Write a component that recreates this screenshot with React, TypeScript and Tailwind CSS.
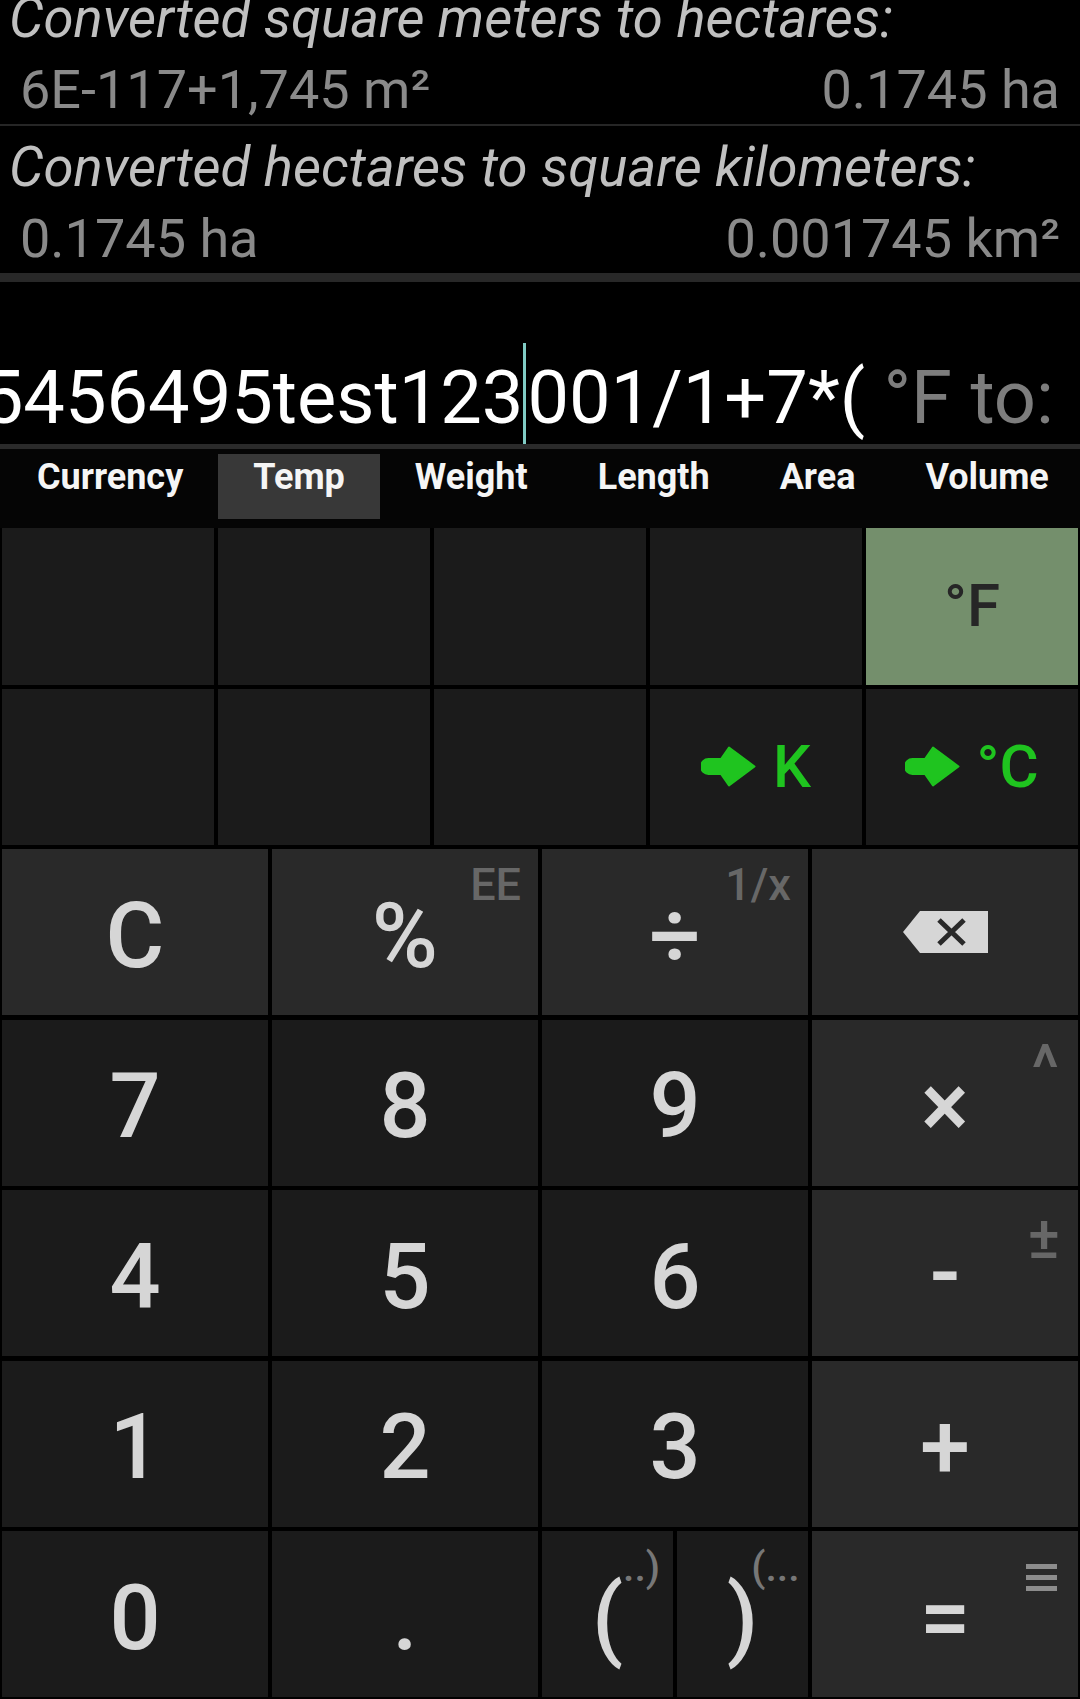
import React from "react";

const GreenArrow = () => (
  <svg width="55" height="41" viewBox="0 0 55 41" className="shrink-0">
    <path
      d="M28 1.5 L53.5 20.5 L28 39.5 L20 28 L7.5 28 A7.5 7.5 0 0 1 7.5 13 L20 13 Z"
      fill="#1fc41f"
      stroke="#1fc41f"
      strokeWidth="2"
      strokeLinejoin="round"
    />
  </svg>
);

const Backspace = () => (
  <svg width="85" height="42" viewBox="0 0 85 42">
    <path d="M0 21 L17 0 H85 V42 H17 Z" fill="#d6d6d6" />
    <path d="M36 9 L61 33 M61 9 L36 33" stroke="#292929" strokeWidth="5" />
  </svg>
);

const Bars = () => (
  <svg width="31" height="27" viewBox="0 0 31 27">
    <rect x="0" y="0" width="31" height="5" fill="#8c8c8c" />
    <rect x="0" y="11" width="31" height="5" fill="#8c8c8c" />
    <rect x="0" y="22" width="31" height="5" fill="#8c8c8c" />
  </svg>
);

function HistoryBlock({ title, left, right }: { title: string; left: string; right: string }) {
  return (
    <div className="shrink-0 pt-[14px] pb-[7px]">
      <div className="h-[54px] pl-[9px] text-[54.5px] leading-none italic text-[#c0c0c0] whitespace-nowrap">
        {title}
      </div>
      <div className="mt-[18px] flex h-[54px] justify-between px-[20px] text-[54px] leading-none text-[#8a8a8a] whitespace-nowrap">
        <span>{left}</span>
        <span>{right}</span>
      </div>
    </div>
  );
}

function Key({
  children,
  op,
  sup,
  lift,
}: {
  children: React.ReactNode;
  op?: boolean;
  sup?: React.ReactNode;
  lift?: boolean;
}) {
  return (
    <div
      className={
        "relative flex items-center justify-center overflow-hidden pt-[9px] " +
        (op ? "bg-[#292929]" : "bg-[#1b1b1b]")
      }
    >
      <span
        className={
          "text-[90px] font-medium leading-none text-[#d6d6d6] " + (lift ? "relative -top-[5px]" : "")
        }
      >
        {children}
      </span>
      {sup}
    </div>
  );
}

export default function App() {
  const tabs = ["Currency", "Temp", "Weight", "Length", "Area", "Volume"];
  return (
    <div className="flex h-[1699px] w-[1080px] flex-col overflow-hidden bg-black font-[family-name:Roboto,sans-serif]">
      {/* history */}
      <div className="flex h-[273px] shrink-0 flex-col justify-end overflow-hidden">
        <HistoryBlock title="Converted square meters to hectares:" left="6E-117+1,745 m²" right="0.1745 ha" />
        <div className="h-[2px] shrink-0 bg-[#262626]" />
        <HistoryBlock title="Converted hectares to square kilometers:" left="0.1745 ha" right="0.001745 km²" />
      </div>
      <div className="h-[9px] shrink-0 bg-[#282828]" />

      {/* input */}
      <div className="flex h-[162px] shrink-0 items-end justify-end overflow-hidden pr-[26px] pb-[9px]">
        <div className="whitespace-nowrap text-[74px] leading-none text-white">
          <span>0123455456495test123</span>
          <span className="relative inline-block h-0 w-[4px]">
            <span className="absolute left-0 top-[-80px] h-[101px] w-[3px] bg-[#80cbc4]" />
          </span>
          <span>001/1+7*(</span>
          <span className="text-[#7d7d7d]"> °F to:</span>
        </div>
      </div>
      <div className="h-[5px] shrink-0 bg-[#2a2a2a]" />

      {/* tabs */}
      <div className="flex h-[79px] shrink-0 items-start overflow-hidden bg-[#050505] pl-[2px] pt-[5px]">
        {tabs.map((t) => (
          <div
            key={t}
            className={
              "h-[65px] shrink-0 px-[35px] pt-[5px] text-[36px] font-bold leading-none text-[#f5f5f5] " +
              (t === "Temp" ? "bg-[#383838]" : "")
            }
          >
            {t}
          </div>
        ))}
      </div>

      {/* temp grid */}
      <div className="grid h-[317px] shrink-0 grid-cols-5 grid-rows-2 gap-[4px] px-[2px]">
        <div className="bg-[#1b1b1b]" />
        <div className="bg-[#1b1b1b]" />
        <div className="bg-[#1b1b1b]" />
        <div className="bg-[#1b1b1b]" />
        <div className="flex items-center justify-center bg-[#748f6c]">
          <span className="text-[60px] font-medium leading-none text-[#262626]">°F</span>
        </div>
        <div className="bg-[#1b1b1b]" />
        <div className="bg-[#1b1b1b]" />
        <div className="bg-[#1b1b1b]" />
        <div className="flex items-center justify-center gap-[17px] bg-[#1b1b1b]">
          <GreenArrow />
          <span className="text-[60px] font-medium leading-none text-[#1fc41f]">K</span>
        </div>
        <div className="flex items-center justify-center gap-[16px] bg-[#1b1b1b]">
          <GreenArrow />
          <span className="text-[60px] font-medium leading-none text-[#1fc41f]">°C</span>
        </div>
      </div>

      <div className="h-[4px] shrink-0" />

      {/* keypad */}
      <div className="grid h-[850px] shrink-0 grid-cols-4 grid-rows-5 gap-x-[4px] gap-y-[4.5px] px-[2px] pb-[2px]">
        <Key op>C</Key>
        <Key
          op
          sup={
            <span className="absolute right-[17px] top-[13px] text-[45px] font-medium leading-none text-[#676767]">
              EE
            </span>
          }
        >
          %
        </Key>
        <Key
          op
          sup={
            <span className="absolute right-[17px] top-[13px] text-[45px] font-medium leading-none text-[#676767]">
              1/x
            </span>
          }
        >
          ÷
        </Key>
        <div className="flex items-center justify-center bg-[#292929]">
          <Backspace />
        </div>

        <Key>7</Key>
        <Key>8</Key>
        <Key>9</Key>
        <Key
          op
          sup={
            <span className="absolute right-[19px] top-[17px] text-[64px] font-medium leading-none text-[#676767]">
              ^
            </span>
          }
        >
          ×
        </Key>

        <Key>4</Key>
        <Key>5</Key>
        <Key>6</Key>
        <Key
          op
          lift
          sup={
            <span className="absolute right-[18px] top-[18px] text-[60px] font-medium leading-none text-[#676767]">
              ±
            </span>
          }
        >
          -
        </Key>

        <Key>1</Key>
        <Key>2</Key>
        <Key>3</Key>
        <Key op>+</Key>

        <Key>0</Key>
        <Key>.</Key>
        <div className="grid grid-cols-2 gap-[4px]">
          <div className="flex items-center justify-center bg-[#1b1b1b] pt-[9px]">
            <span className="relative text-[90px] font-medium leading-none text-[#d6d6d6]">
              (
              <span className="absolute left-full top-[-27px] whitespace-nowrap text-[41px] font-medium leading-none text-[#777]">
                ..)
              </span>
            </span>
          </div>
          <div className="flex items-center justify-center bg-[#1b1b1b] pt-[9px]">
            <span className="relative text-[90px] font-medium leading-none text-[#d6d6d6]">
              )
              <span className="absolute left-[calc(100%-7px)] top-[-27px] whitespace-nowrap text-[41px] font-medium leading-none text-[#777]">
                (...
              </span>
            </span>
          </div>
        </div>
        <Key
          op
          sup={
            <span className="absolute right-[21px] top-[33px]">
              <Bars />
            </span>
          }
        >
          =
        </Key>
      </div>
    </div>
  );
}
